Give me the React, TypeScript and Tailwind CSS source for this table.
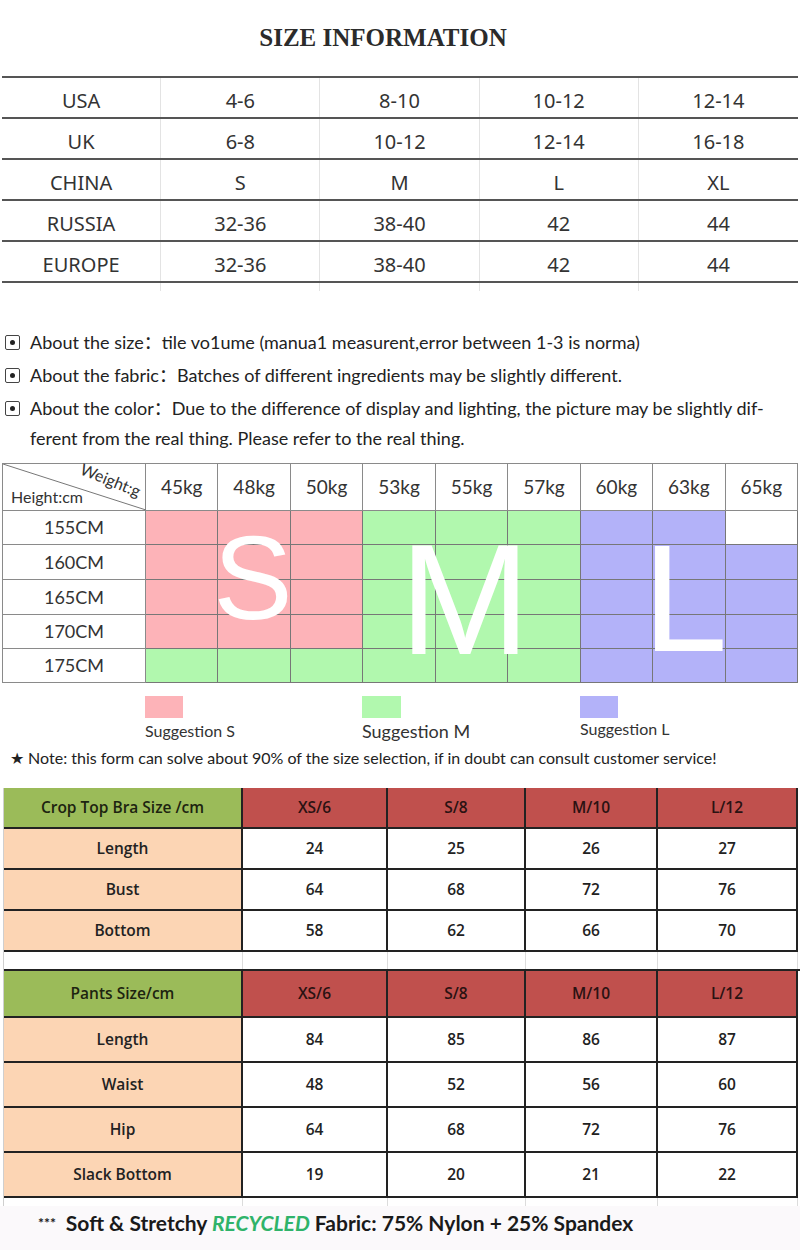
import React from 'react';

const topRows = [
  ['USA', '4-6', '8-10', '10-12', '12-14'],
  ['UK', '6-8', '10-12', '12-14', '16-18'],
  ['CHINA', 'S', 'M', 'L', 'XL'],
  ['RUSSIA', '32-36', '38-40', '42', '44'],
  ['EUROPE', '32-36', '38-40', '42', '44'],
];

const weights = ['45kg', '48kg', '50kg', '53kg', '55kg', '57kg', '60kg', '63kg', '65kg'];

type C = 'p' | 'g' | 'b' | 'w';
const chartRows: { h: string; cells: C[]; cls: string }[] = [
  { h: '155CM', cells: ['p', 'p', 'p', 'g', 'g', 'g', 'b', 'b', 'w'], cls: 'h-[34px]' },
  { h: '160CM', cells: ['p', 'p', 'p', 'g', 'g', 'g', 'b', 'b', 'b'], cls: 'h-[35px]' },
  { h: '165CM', cells: ['p', 'p', 'p', 'g', 'g', 'g', 'b', 'b', 'b'], cls: 'h-[35px]' },
  { h: '170CM', cells: ['p', 'p', 'p', 'g', 'g', 'g', 'b', 'b', 'b'], cls: 'h-[34px]' },
  { h: '175CM', cells: ['g', 'g', 'g', 'g', 'g', 'g', 'b', 'b', 'b'], cls: 'h-[34px]' },
];

const cellBg: Record<C, string> = {
  p: 'bg-[#fdb3b8]',
  g: 'bg-[#b1f8ae]',
  b: 'bg-[#b3b2f9]',
  w: 'bg-white',
};

const sizes = ['XS/6', 'S/8', 'M/10', 'L/12'];

const cropRows = [
  ['Length', '24', '25', '26', '27'],
  ['Bust', '64', '68', '72', '76'],
  ['Bottom', '58', '62', '66', '70'],
];

const pantsRows = [
  ['Length', '84', '85', '86', '87'],
  ['Waist', '48', '52', '56', '60'],
  ['Hip', '64', '68', '72', '76'],
  ['Slack Bottom', '19', '20', '21', '22'],
];

const COLS = 'grid grid-cols-[239px_145px_138px_132px_140px]';

function CheckIcon() {
  return (
    <span className="mt-[8px] flex h-[15px] w-[15px] shrink-0 items-center justify-center rounded-[2px] border-[1.5px] border-[#444]">
      <span className="h-[5px] w-[5px] rounded-full bg-[#222]" />
    </span>
  );
}

function SizeTable({
  title,
  rows,
  headH,
  rowH,
  topLine,
}: {
  title: string;
  rows: string[][];
  headH: string;
  rowH: string;
  topLine: boolean;
}) {
  return (
    <div className={topLine ? 'border-t-2 border-[#222]' : ''}>
      <div className={`${COLS} ${headH}`}>
        <div className="flex items-center justify-center border-r-2 border-b-2 border-[#222] bg-[#9bbb59] text-[#1d2410]">
          {title}
        </div>
        {sizes.map((s) => (
          <div
            key={s}
            className="flex items-center justify-center border-r-2 border-b-2 border-[#222] bg-[#c0504d] text-[#2a1212]"
          >
            {s}
          </div>
        ))}
      </div>
      {rows.map((r) => (
        <div key={r[0]} className={`${COLS} ${rowH}`}>
          <div className="flex items-center justify-center border-r-2 border-b-2 border-[#222] bg-[#fcd5b4]">{r[0]}</div>
          {r.slice(1).map((v, i) => (
            <div key={i} className="flex items-center justify-center border-r-2 border-b-2 border-[#222] bg-white">
              {v}
            </div>
          ))}
        </div>
      ))}
    </div>
  );
}

function GapRow({ h }: { h: string }) {
  return (
    <div className={`${COLS} ${h}`}>
      {[0, 1, 2, 3, 4].map((i) => (
        <div key={i} className="border-r border-[#dcdcdc]" />
      ))}
    </div>
  );
}

export default function App() {
  return (
    <div className="h-[1250px] w-[800px] overflow-hidden bg-white text-[#333]">
      {/* Title */}
      <div className="flex h-[76px] items-center justify-center pr-[34px]">
        <h1 className="font-['Liberation_Serif',serif] text-[25px] font-bold text-[#2b2b2b]">SIZE INFORMATION</h1>
      </div>

      {/* Top size table */}
      <div className="mx-[2px] border-t-2 border-[#555] font-['Noto_Sans',sans-serif] text-[20px] text-[#333]">
        {topRows.map((r) => (
          <div key={r[0]} className="grid h-[41px] grid-cols-5 border-b-2 border-[#555]">
            {r.map((c, i) => (
              <div
                key={i}
                className={`flex items-center justify-center pt-[6px] ${i < 4 ? 'border-r border-[#e3e3e3]' : ''}`}
              >
                {c}
              </div>
            ))}
          </div>
        ))}
        <div className="grid h-[8px] grid-cols-5">
          {[0, 1, 2, 3].map((i) => (
            <div key={i} className="border-r border-[#e3e3e3]" />
          ))}
        </div>
      </div>

      {/* Notes */}
      <div className="flex flex-col gap-[3px] pt-[36px] pl-[5px] font-['Lato','Noto_Sans_CJK_SC',sans-serif] text-[18px] leading-[30px] text-[#222]">
        <div className="flex gap-[10px]">
          <CheckIcon />
          <p>About the size：tile vo1ume (manua1 measurent,error between 1-3 is norma)</p>
        </div>
        <div className="flex gap-[10px]">
          <CheckIcon />
          <p>About the fabric：Batches of different ingredients may be slightly different.</p>
        </div>
        <div className="flex gap-[10px]">
          <CheckIcon />
          <p>
            About the color：Due to the difference of display and lighting, the picture may be slightly dif-
            <br />
            ferent from the real thing. Please refer to the real thing.
          </p>
        </div>
      </div>

      {/* Weight / height chart */}
      <div className="relative mx-[2px] mt-[10px] border-t border-l border-[#8a8a8a] font-['Lato',sans-serif] text-[#333]">
        <div className="grid h-[47px] grid-cols-[143px_repeat(9,1fr)]">
          <div className="relative border-r border-b border-[#8a8a8a]">
            <svg className="absolute inset-0" width="143" height="46">
              <line x1="0" y1="0" x2="143" y2="46" stroke="#777" strokeWidth="1" />
            </svg>
            <span className="absolute top-[8px] left-[76px] rotate-[22deg] text-[16px] leading-none">Weight:g</span>
            <span className="absolute top-[25px] left-[8px] text-[16px] leading-none">Height:cm</span>
          </div>
          {weights.map((w) => (
            <div key={w} className="flex items-center justify-center border-r border-b border-[#8a8a8a] text-[19px]">
              {w}
            </div>
          ))}
        </div>
        {chartRows.map((r) => (
          <div key={r.h} className={`grid grid-cols-[143px_repeat(9,1fr)] ${r.cls}`}>
            <div className="flex items-center justify-center border-r border-b border-[#8a8a8a] text-[18px]">{r.h}</div>
            {r.cells.map((c, i) => (
              <div key={i} className={`border-r border-b border-[#777] ${cellBg[c]}`} />
            ))}
          </div>
        ))}
        <span className="absolute top-[54px] left-[190px] w-[120px] text-center font-['Liberation_Sans',sans-serif] text-[119px] leading-none text-white">
          S
        </span>
        <span className="absolute top-[57px] left-[382px] w-[160px] text-center font-['Liberation_Sans',sans-serif] text-[157px] leading-none text-white">
          M
        </span>
        <span className="absolute top-[57px] left-[602px] w-[160px] text-center font-['Liberation_Sans',sans-serif] text-[153px] leading-none text-white">
          L
        </span>
      </div>

      {/* Legend */}
      <div className="mt-[13px] flex pl-[145px] font-['Lato',sans-serif] text-[#333]">
        <div className="flex w-[217px] flex-col">
          <div className="h-[22px] w-[38px] bg-[#fdb3b8]" />
          <span className="mt-[3px] text-[16px] leading-[20px]">Suggestion S</span>
        </div>
        <div className="flex w-[218px] flex-col">
          <div className="h-[22px] w-[39px] bg-[#b1f8ae]" />
          <span className="mt-[3px] text-[18px] leading-[20px]">Suggestion M</span>
        </div>
        <div className="flex flex-col">
          <div className="h-[22px] w-[38px] bg-[#b3b2f9]" />
          <span className="mt-[1px] text-[16px] leading-[20px]">Suggestion L</span>
        </div>
      </div>
      <p className="mt-[7px] pl-[10px] font-['Lato',sans-serif] text-[16px] leading-[20px] text-[#222]">
        ★ Note: this form can solve about 90% of the size selection, if in doubt can consult customer service!
      </p>

      {/* Bottom tables */}
      <div className="mt-[20px] ml-[3px] border-l border-[#cfcfcf] font-['Open_Sans',sans-serif] text-[15.5px] font-semibold text-[#222]">
        <SizeTable title="Crop Top Bra Size /cm" rows={cropRows} headH="h-[41px]" rowH="h-[41px]" topLine={false} />
        <GapRow h="h-[17px]" />
        <SizeTable title="Pants Size/cm" rows={pantsRows} headH="h-[47px]" rowH="h-[45px]" topLine={true} />
        <GapRow h="h-[8px]" />
      </div>

      {/* Footer */}
      <div className="flex h-[50px] items-start bg-[#fbf9fb] pt-[2px] pl-[38px] font-['Lato',sans-serif] text-[21px] font-bold text-[#1a1a1a]">
        <span className="mr-[10px] text-[14px] leading-[30px]">***</span>
        <span className="leading-[30px]">
          Soft &amp; Stretchy <span className="italic text-[#2fb36a]">RECYCLED</span> Fabric: 75% Nylon + 25% Spandex
        </span>
      </div>
    </div>
  );
}
